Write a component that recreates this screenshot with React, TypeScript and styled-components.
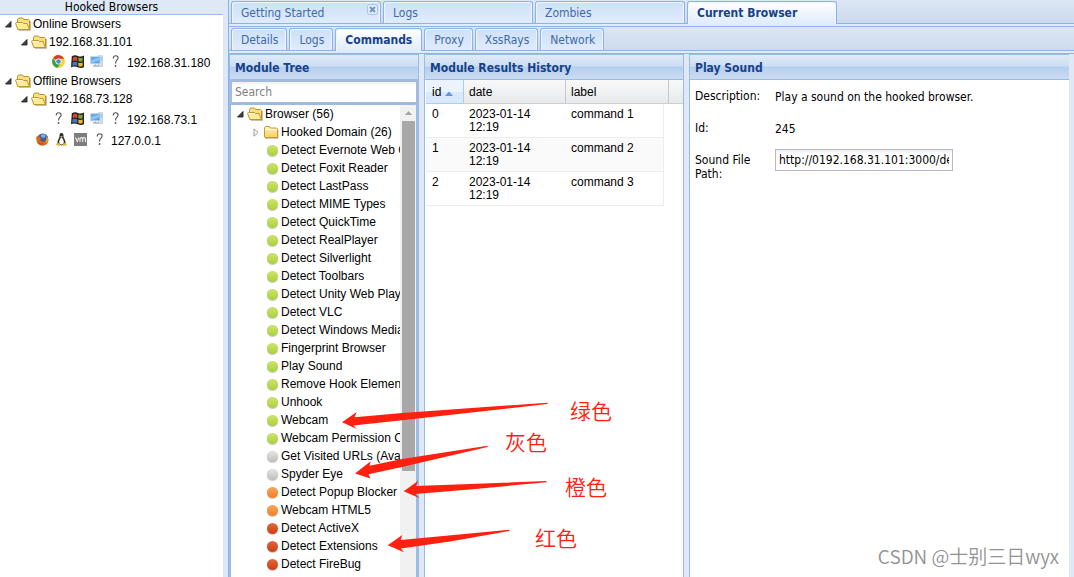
import React from "react";
import styled, { createGlobalStyle, css } from "styled-components";

const tahoma = `Tahoma, "DejaVu Sans Condensed", "Noto Sans", sans-serif`;
const arial = `"Liberation Sans", Arial, sans-serif`;

const GlobalStyle = createGlobalStyle`
  * { box-sizing: border-box; }
  body { margin: 0; background: #dfe8f6; font: 12px/14px ${arial}; color: #000; }
  button, input { font: inherit; margin: 0; }
  ul { list-style: none; margin: 0; padding: 0; }
`;

const Shell = styled.div`
  position: relative;
  display: grid;
  grid-template-columns: 223px minmax(0, 1fr);
  column-gap: 5px;
  height: 100vh;
  overflow: hidden;
`;

/* ---------- Left: hooked browsers ---------- */

const Sidebar = styled.aside`
  background: #fff;
`;

const SidebarTitle = styled.div`
  height: 15px;
  border-bottom: 1px solid #99bbe8;
  background: #dfe8f6;
  text-align: center;
  line-height: 15px;
  font-family: ${tahoma};
`;

const Row = styled.li<{ $level: number; $tall?: boolean }>`
  display: flex;
  align-items: center;
  height: ${(p) => (p.$tall ? 21 : 18)}px;
  padding-left: ${(p) => p.$level * 16}px;
  white-space: nowrap;
`;

const Twisty = styled.span`
  display: flex;
  flex: none;
  width: 15px;
  padding-left: 5px;
`;

const IconSlot = styled.span`
  display: flex;
  flex: none;
  justify-content: center;
  width: 16px;
  margin-right: 2px;
`;

const ZombieIcons = styled.span<{ $indent: number }>`
  display: flex;
  gap: 6px;
  padding-left: ${(p) => p.$indent}px;
  margin-right: 5px;
`;

const ZombieText = styled.span`
  padding-top: 3px;
`;

/* ---------- Right: tabs ---------- */

const Main = styled.main`
  display: flex;
  flex-direction: column;
  min-width: 0;
  border-left: 1px solid #8db2e3;
`;

const TabStrip = styled.nav`
  display: flex;
  flex: none;
  align-items: flex-end;
  gap: 2px;
  height: 24px;
  padding-left: 2px;
  border-bottom: 1px solid #8db2e3;
  background: linear-gradient(#dde7f4, #cbdaee);
`;

const StripSpacer = styled.div`
  flex: none;
  height: 3px;
  background: #deecfd;
  border-bottom: 1px solid #8db2e3;
`;

const Tab = styled.button<{ $wide?: boolean; $active?: boolean }>`
  display: flex;
  align-items: flex-start;
  justify-content: space-between;
  flex: none;
  width: ${(p) => (p.$wide ? "150px" : "auto")};
  height: 22px;
  padding: 4px 8px 0 9px;
  border: 1px solid #8db2e3;
  border-bottom: 0;
  border-radius: 3px 3px 0 0;
  background: linear-gradient(#cfe0f6, #deecfd);
  box-shadow: inset 1px 1px 0 #eef5fd, inset -1px 0 0 #eef5fd;
  color: #416aa3;
  font-family: ${tahoma};
  line-height: 14px;
  white-space: nowrap;
  ${(p) =>
    p.$active &&
    css`
      height: 23px;
      margin-bottom: -1px;
      padding-right: 9px;
      background: linear-gradient(#fff, #deecfd);
      color: #15428b;
      font-weight: bold;
    `}
`;

const CloseMark = styled.svg`
  flex: none;
  margin: -2px -6px 0 0;
`;

/* ---------- Panels ---------- */

const Panels = styled.div`
  display: grid;
  grid-template-columns: 190px 260px minmax(0, 1fr);
  column-gap: 5px;
  flex: 1;
  min-height: 0;
  padding-right: 5px;
  background: #dfe8f6;
`;

const Panel = styled.section<{ $open?: boolean }>`
  display: flex;
  flex-direction: column;
  min-width: 0;
  min-height: 0;
  border: 1px solid #99bbe8;
  border-bottom: 0;
  ${(p) => p.$open && "border-right: 0;"}
  background: #fff;
`;

const PanelTitle = styled.h2`
  flex: none;
  height: 25px;
  margin: 0;
  padding: 5px;
  border-bottom: 1px solid #99bbe8;
  background: linear-gradient(#dfeaf7 0, #cddef3 11px, #b5cfee 12px, #ccdcf1 24px);
  color: #15428b;
  font: bold 12px/16px ${tahoma};
  white-space: nowrap;
`;

const TreeBody = styled.div`
  display: flex;
  flex-direction: column;
  flex: 1;
  min-height: 0;
  padding: 1px 1px 0;
  background: #99bbe8;
`;

const Search = styled.input`
  flex: none;
  width: 100%;
  height: 22px;
  padding: 0 3px;
  margin-bottom: 2px;
  border: 1px solid #b5b8c8;
  border-radius: 0;
  background: linear-gradient(#eee, #fff 4px);
  font-family: ${tahoma};
  &::placeholder { color: #808080; opacity: 1; }
`;

const TreeScroller = styled.div`
  display: flex;
  flex: 1;
  min-height: 0;
  margin-right: 1px;
  background: #fff;
`;

const Modules = styled.ul`
  flex: 1;
  min-width: 0;
  padding-left: 1px;
  overflow: hidden;
`;

const Leaf = styled.li`
  display: flex;
  align-items: center;
  height: 18px;
  padding-left: 31px;
  white-space: nowrap;
`;

const Track = styled.div`
  display: flex;
  flex-direction: column;
  align-items: center;
  flex: none;
  width: 16px;
  padding-top: 6px;
  background: #f1f1f1;
`;

const Thumb = styled.div`
  width: 13px;
  height: 75%;
  margin-top: 6px;
  background: #a8a8a8;
`;

/* ---------- Results table ---------- */

const Table = styled.table`
  width: 100%;
  padding-left: 1px;
  table-layout: fixed;
  border-collapse: separate;
  border-spacing: 0;
`;

const Th = styled.th<{ $w?: number; $sorted?: boolean }>`
  width: ${(p) => (p.$w ? `${p.$w}px` : "auto")};
  height: 24px;
  padding: 0 0 0 5px;
  border-right: ${(p) => (p.$w ? "1px solid #c8c8c8" : "0")};
  border-bottom: 1px solid #d0d0d0;
  background: linear-gradient(#f9f9f9, #e7e9ec);
  font-weight: normal;
  text-align: left;
  ${(p) =>
    p.$sorted &&
    css`
      padding-left: 6px;
      border-color: #aaccf6;
      background: linear-gradient(#ebf3fd 50%, #d9e8fb 50%);
    `}
`;

const SortArrow = styled.svg`
  margin-left: 4px;
`;

const Td = styled.td`
  padding: 0;
`;

const Cell = styled.div<{ $alt?: boolean; $first?: boolean; $last?: boolean }>`
  height: 34px;
  padding: 4px 20px 0 ${(p) => (p.$first ? 6 : 5)}px;
  border-bottom: 1px solid #ededed;
  background: ${(p) => (p.$alt ? "#fafafa" : "#fff")};
  line-height: 13px;
  ${(p) => p.$last && "margin-right: 5px; border-right: 1px solid #ededed; padding-right: 0;"}
`;

/* ---------- Command form ---------- */

const Form = styled.form`
  display: grid;
  grid-template-columns: 80px minmax(0, 1fr);
  grid-template-rows: 32px 32px auto;
  padding: 9px 5px;
  line-height: 14px;
  font-family: ${tahoma};
`;

const FieldLabel = styled.label`
  padding-right: 10px;
`;

const FieldValue = styled.output`
  padding-top: 1px;
`;

const PathInput = styled.input`
  width: 178px;
  height: 22px;
  margin-top: -4px;
  padding: 0 3px;
  border: 1px solid #b5b8c8;
  border-radius: 0;
  background: linear-gradient(#eee, #fff 4px);
`;

/* ---------- Overlay notes ---------- */

const Arrows = styled.svg`
  position: absolute;
  left: 340px;
  top: 400px;
  pointer-events: none;
`;

const Note = styled.span<{ $x: number; $y: number }>`
  position: absolute;
  left: ${(p) => p.$x}px;
  top: ${(p) => p.$y}px;
  color: #ff2010;
  font: 350 21px/24px "Noto Sans CJK SC", sans-serif;
`;

const Watermark = styled.span`
  position: absolute;
  right: 15px;
  bottom: 8px;
  color: #929292;
  font: 350 19px/26px "Noto Sans CJK SC", sans-serif;
`;

/* ---------- Icons ---------- */

const OpenTwisty = () => (
  <svg width="7" height="7" viewBox="0 0 7 7">
    <path d="M6 .5V6H.5z" fill="#444" stroke="#111" strokeWidth=".8" />
  </svg>
);

const ClosedTwisty = () => (
  <svg width="7" height="9" viewBox="0 0 7 9">
    <path d="M1 .8L5 4.5 1 8.2z" fill="#fff" stroke="#999" />
  </svg>
);

const FolderOpen = () => (
  <svg width="16" height="14" viewBox="0 0 16 14">
    <path d="M4 13.500h11.500V4" fill="none" stroke="#8a7440" strokeOpacity=".45" />
    <path d="M2.500 12V2.500l1-1.500h4l1 1.500h5l1 1V12.500H3z" fill="#f9e07e" stroke="#bb9130" />
    <path d="M2.800 12.500L.6 6.500q0-1 1-1h6l1 1h3.400l2.400 6z" fill="#fdeb9c" stroke="#c1962f" />
    <path d="M1.800 6.500h5.500" stroke="#fffbe0" />
  </svg>
);

const FolderClosed = () => (
  <svg width="16" height="14" viewBox="0 0 16 14">
    <defs>
      <linearGradient id="folder" x2="0" y2="1">
        <stop stopColor="#fff3b8" />
        <stop offset="1" stopColor="#f4cf5e" />
      </linearGradient>
    </defs>
    <path d="M2 13.500h13V5" fill="none" stroke="#8a7440" strokeOpacity=".4" />
    <path d="M1.500 12V2.500l1-1h4l1 1.500h6l1 1v8.500H2z" fill="url(#folder)" stroke="#c09a35" />
    <path d="M2 4.500h12" stroke="#fffbe0" />
  </svg>
);

type Tone = "green" | "gray" | "orange" | "red";
const tones: Record<Tone, [string, string]> = {
  green: ["#cfe568", "#a9d13f"],
  gray: ["#e6e6e6", "#bdbdbd"],
  orange: ["#fba55a", "#f07f22"],
  red: ["#e0683f", "#d23c0c"],
};

const Dot = styled.span<{ $tone: Tone }>`
  flex: none;
  width: 11px;
  height: 11px;
  margin-left: 2px;
  border-radius: 50%;
  background: ${(p) => `linear-gradient(${tones[p.$tone][0]}, ${tones[p.$tone][1]})`};
  box-shadow: 0 1px 1px #ccc, inset 0 0 1px #8886;
`;

const Chrome = () => (
  <svg width="13" height="13" viewBox="0 0 13 13">
    <circle cx="6.500" cy="6.500" r="6.400" fill="#f9d430" />
    <path d="M6.500 6.500L1.100 3.100A6.400 6.400 0 0 1 12.300 3.800L6.500 3.800z" fill="#dc3b2a" />
    <path d="M1.100 3.100a6.400 6.400 0 0 0 4.500 9.750L8.900 8 4 7.500z" fill="#35a04a" />
    <circle cx="6.500" cy="6.500" r="3" fill="#fff" />
    <circle cx="6.500" cy="6.500" r="2.300" fill="#4a8ad8" />
  </svg>
);

const Windows = () => (
  <svg width="13" height="13" viewBox="0 0 13 13">
    <path d="M.8 1.300Q4-.4 7 1 10 2.200 13 .6V12.200Q10 13.600 6.800 12.200 3.500 11 0 12.200z" fill="#2b2020" />
    <path d="M2 2.400Q4 1.200 6.200 2.200V6Q4 5 1.700 6z" fill="#d8482a" />
    <path d="M7.400 2.600Q9.500 3.500 11.600 2.500V6.200Q9.500 7.100 7.400 6.100z" fill="#74ac3c" />
    <path d="M1.600 7.200Q4 6.200 6.200 7.200v3.700Q4 9.800 1.300 10.800z" fill="#3a7cc4" />
    <path d="M7.400 7.500Q9.500 8.500 11.600 7.600v3.400Q9.500 12 7.400 11z" fill="#edb92c" />
  </svg>
);

const Computer = () => (
  <svg width="13" height="13" viewBox="0 0 13 13">
    <rect x="8.500" y=".8" width="4" height="10.700" fill="#d3e2ef" stroke="#a9c1d6" strokeWidth=".7" />
    <path d="M11 3h1M11 5h1" stroke="#88a5bd" />
    <rect x=".6" y="1.600" width="9.600" height="7.200" fill="#5ea5e6" stroke="#c3d8ea" />
    <path d="M1.200 8.200V5L9.600 2.200v3z" fill="#8cc3f3" />
    <path d="M3 11h5.500M5.500 9.200v1.500" stroke="#a3b6c8" strokeWidth="1.300" />
  </svg>
);

const Unknown = () => (
  <svg width="13" height="13" viewBox="0 0 13 13">
    <path d="M4.200 3.500C4.300 1.700 5.200.8 6.700.8c1.500 0 2.400.9 2.400 2.200C9.100 5.200 6.600 5.300 6.600 8v.6" fill="none" stroke="#555" strokeWidth="1.100" />
    <circle cx="6.600" cy="11" r=".9" fill="#555" />
  </svg>
);

const Firefox = () => (
  <svg width="13" height="13" viewBox="0 0 13 13">
    <circle cx="6.700" cy="6" r="5.500" fill="#3b5f9e" />
    <path d="M4.500 2Q7 .6 9.500 2L9 4.500 6 4.800z" fill="#7fb0de" />
    <path d="M.6 2.500Q1.500 4 2.600 3.300L5 4.700 4.200 6.500Q5.200 9.300 8 8.700 10.700 7.700 10.200 3.200 12.600 5 12.500 7.200 11.500 12.600 6.500 12.700 1.200 12.300.4 7.200.2 4.500.6 2.500z" fill="#dd6418" />
    <path d="M1.500 8.500Q4 11.500 8 10.500 6 12.300 3.800 11.200z" fill="#b5401a" />
    <path d="M10.300 3.200Q12 5 11.800 7.500 11 9.500 9.800 10 11.200 7.200 10.300 3.200z" fill="#f7c143" />
  </svg>
);

const Linux = () => (
  <svg width="13" height="13" viewBox="0 0 13 13">
    <path d="M6.500 0C4.500 0 4.300 2 4.500 3.800 4.400 5.500 2 7.500 2.300 10.500L6.500 12.500 10.700 10.500C11 7.500 8.600 5.500 8.500 3.800 8.700 2 8.500 0 6.500 0z" fill="#2e2e2e" />
    <path d="M6.500 4.600C5 5.600 3.900 8 4.300 10.500L6.500 11.700 8.700 10.500C9.100 8 8 5.600 6.500 4.600z" fill="#fff" />
    <path d="M5.200 3.500L6.500 3l1.400.5L6.500 4.700zM2.300 9L5.500 12 4.300 13 .9 12zM10.700 9L7.500 12l1.200 1 3.400-1z" fill="#f0b72a" />
  </svg>
);

const Vmware = () => (
  <svg width="13" height="13" viewBox="0 0 13 13">
    <rect width="13" height="13" fill="#7d7d7d" />
    <path d="M1.500 4.500L3.200 8.500 5 4.500M6 9V5.500Q7.500 3.800 8.700 5.500V9M8.700 5.500Q10.300 3.800 11.500 5.500V9" fill="none" stroke="#eee" strokeWidth="1.100" />
  </svg>
);

/* ---------- Data ---------- */

const modules: [string, Tone][] = [
  ["Detect Evernote Web Clipper", "green"],
  ["Detect Foxit Reader", "green"],
  ["Detect LastPass", "green"],
  ["Detect MIME Types", "green"],
  ["Detect QuickTime", "green"],
  ["Detect RealPlayer", "green"],
  ["Detect Silverlight", "green"],
  ["Detect Toolbars", "green"],
  ["Detect Unity Web Player", "green"],
  ["Detect VLC", "green"],
  ["Detect Windows Media Player", "green"],
  ["Fingerprint Browser", "green"],
  ["Play Sound", "green"],
  ["Remove Hook Element", "green"],
  ["Unhook", "green"],
  ["Webcam", "green"],
  ["Webcam Permission Check", "green"],
  ["Get Visited URLs (Avant Browser)", "gray"],
  ["Spyder Eye", "gray"],
  ["Detect Popup Blocker", "orange"],
  ["Webcam HTML5", "orange"],
  ["Detect ActiveX", "red"],
  ["Detect Extensions", "red"],
  ["Detect FireBug", "red"],
];

const Branch = ({ level, label, closed }: { level: number; label: string; closed?: boolean }) => (
  <Row $level={level}>
    <Twisty>{closed ? <ClosedTwisty /> : <OpenTwisty />}</Twisty>
    <IconSlot>{closed ? <FolderClosed /> : <FolderOpen />}</IconSlot>
    {label}
  </Row>
);

const Zombie = ({ indent, icons, ip }: { indent: number; icons: React.FC[]; ip: string }) => (
  <Row $level={0} $tall>
    <ZombieIcons $indent={indent}>
      {icons.map((Icon, i) => <Icon key={i} />)}
    </ZombieIcons>
    <ZombieText>{ip}</ZombieText>
  </Row>
);

export default function App() {
  return (
    <Shell>
      <GlobalStyle />
      <Sidebar>
        <SidebarTitle>Hooked Browsers</SidebarTitle>
        <ul>
          <Branch level={0} label="Online Browsers" />
          <Branch level={1} label="192.168.31.101" />
          <Zombie indent={52} icons={[Chrome, Windows, Computer, Unknown]} ip="192.168.31.180" />
          <Branch level={0} label="Offline Browsers" />
          <Branch level={1} label="192.168.73.128" />
          <Zombie indent={52} icons={[Unknown, Windows, Computer, Unknown]} ip="192.168.73.1" />
          <Zombie indent={36} icons={[Firefox, Linux, Vmware, Unknown]} ip="127.0.0.1" />
        </ul>
      </Sidebar>

      <Main>
        <TabStrip>
          <Tab $wide>
            Getting Started
            <CloseMark width="11" height="11" viewBox="0 0 11 11">
              <rect x=".5" y=".5" width="10" height="10" rx="2" fill="#e3eefb" stroke="#a9c4e6" />
              <path d="M3 3l5 5M8 3L3 8" stroke="#6f94c6" strokeWidth="2" />
            </CloseMark>
          </Tab>
          <Tab $wide>Logs</Tab>
          <Tab $wide>Zombies</Tab>
          <Tab $wide $active>Current Browser</Tab>
        </TabStrip>
        <StripSpacer />
        <TabStrip>
          <Tab>Details</Tab>
          <Tab>Logs</Tab>
          <Tab $active>Commands</Tab>
          <Tab>Proxy</Tab>
          <Tab>XssRays</Tab>
          <Tab>Network</Tab>
        </TabStrip>
        <StripSpacer />

        <Panels>
          <Panel>
            <PanelTitle>Module Tree</PanelTitle>
            <TreeBody>
              <Search placeholder="Search" aria-label="Search modules" />
              <TreeScroller>
                <Modules>
                  <Branch level={0} label="Browser (56)" />
                  <Branch level={1} label="Hooked Domain (26)" closed />
                  {modules.map(([name, tone]) => (
                    <Leaf key={name}>
                      <IconSlot><Dot $tone={tone} /></IconSlot>
                      {name}
                    </Leaf>
                  ))}
                </Modules>
                <Track>
                  <svg width="7" height="4" viewBox="0 0 7 4"><path d="M0 4L3.500 0 7 4z" fill="#a3a3a3" /></svg>
                  <Thumb />
                </Track>
              </TreeScroller>
            </TreeBody>
          </Panel>

          <Panel>
            <PanelTitle>Module Results History</PanelTitle>
            <Table>
              <thead>
                <tr>
                  <Th $w={38} $sorted>
                    id
                    <SortArrow width="8" height="5" viewBox="0 0 8 5"><path d="M0 5L4 .5 8 5z" fill="#6593cf" /></SortArrow>
                  </Th>
                  <Th $w={102}>date</Th>
                  <Th $w={103}>label</Th>
                  <Th aria-hidden="true" />
                </tr>
              </thead>
              <tbody>
                {["command 1", "command 2", "command 3"].map((label, i) => (
                  <tr key={label}>
                    <Td><Cell $first $alt={i === 1}>{i}</Cell></Td>
                    <Td><Cell $alt={i === 1}>2023-01-14 12:19</Cell></Td>
                    <Td><Cell $last $alt={i === 1}>{label}</Cell></Td>
                  </tr>
                ))}
              </tbody>
            </Table>
          </Panel>

          <Panel $open>
            <PanelTitle>Play Sound</PanelTitle>
            <Form onSubmit={(e) => e.preventDefault()}>
              <FieldLabel htmlFor="description">Description:</FieldLabel>
              <FieldValue id="description">Play a sound on the hooked browser.</FieldValue>
              <FieldLabel htmlFor="module-id">Id:</FieldLabel>
              <FieldValue id="module-id">245</FieldValue>
              <FieldLabel htmlFor="path">Sound File Path:</FieldLabel>
              <PathInput id="path" defaultValue="http://0192.168.31.101:3000/demos/sound.wav" />
            </Form>
          </Panel>
        </Panels>
      </Main>

      <Arrows width="210" height="156" viewBox="340 400 210 156" fill="#ff2010">
        <path d="M342 422.300L356.700 412 354.500 417.300 402 413 547.500 402.700V404L402 420.300 353.500 425.500 357 429z" />
        <path d="M355 473.500L370.700 461.300 369.500 465.700 402 459 487.500 445.700V447L402 467 368.500 474.300 370.500 478.500z" />
        <path d="M403.700 491.300L418.300 480.700 416 486 546.500 481V482.200L470 489.500 415.500 494 419.300 498z" />
        <path d="M387.700 545.300L402.300 535 400.700 540 509.500 529.700V531L450 541.500 401 548.500 404 552.300z" />
      </Arrows>
      <Note $x={570} $y={398}>绿色</Note>
      <Note $x={505} $y={429}>灰色</Note>
      <Note $x={565} $y={474}>橙色</Note>
      <Note $x={535} $y={525}>红色</Note>
      <Watermark>CSDN @士别三日wyx</Watermark>
    </Shell>
  );
}
